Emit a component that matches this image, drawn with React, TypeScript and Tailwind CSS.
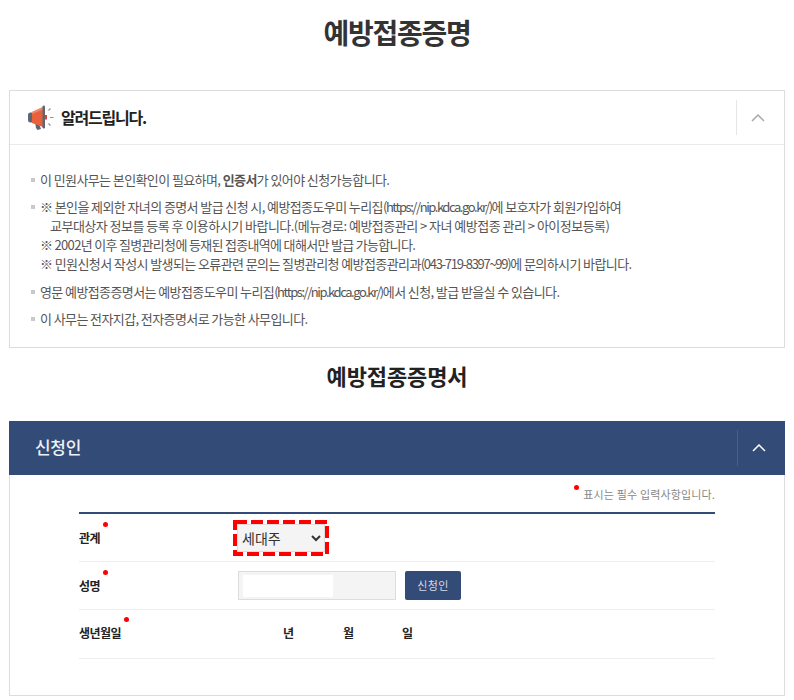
import type { ReactNode } from 'react'

const font = { fontFamily: '"Noto Sans CJK KR", "Noto Sans", sans-serif' }

function Megaphone() {
  return (
    <svg width="28" height="26" viewBox="0 0 28 26" className="shrink-0">
      <path d="M8 17l3-.5 3 7.500-3.500 1-1.500-2z" fill="#5d6675" />
      <rect x="1" y="7.500" width="6" height="10" rx="2.500" fill="#5d6675" />
      <path d="M5 7l11-5v20L5 18z" fill="#e8603c" />
      <path d="M5 7l11-5v2.500L5 9z" fill="#f08a6a" />
      <rect x="15.500" y="0.500" width="2.500" height="23" rx="1.200" fill="#5d6675" />
      <rect x="18" y="10" width="2" height="4.500" fill="#d8433a" />
      <path d="M21.500 5.500l2-2M23 12.500h3.500M21.500 18.500l2 2" stroke="#8a919c" strokeWidth="1.100" fill="none" />
    </svg>
  )
}

function Chevron({ color }: { color: string }) {
  return (
    <svg width="14" height="8" viewBox="0 0 14 8">
      <path d="M1 7l6-6 6 6" stroke={color} strokeWidth="1.500" fill="none" />
    </svg>
  )
}

function Item({ children, className }: { children: ReactNode; className?: string }) {
  return (
    <li className={`flex ${className ?? ''}`}>
      <span className="mt-[8px] mr-[5px] size-[4px] shrink-0 bg-[#c9c9c9]" />
      <div>{children}</div>
    </li>
  )
}

function Url() {
  return <span className="tracking-[-1.450px]">(https://nip.kdca.go.kr/)</span>
}

function Label({ text, dot }: { text: string; dot: string }) {
  return (
    <div className="w-[159px] shrink-0 text-[12px] font-bold tracking-[-0.5px] text-[#222]">
      <span className="relative">
        {text}
        <span className={`absolute top-[-7px] size-[5px] rounded-full bg-[#f00] ${dot}`} />
      </span>
    </div>
  )
}

function App() {
  return (
    <div style={font} className="h-[700px] w-[794px] overflow-hidden bg-white px-[9px]">
      <h1 className="flex h-[63px] items-center justify-center text-[28px] font-bold tracking-[-1.300px] text-[#333]">
        예방접종증명
      </h1>

      <section className="mt-[27px] h-[258px] border-[1px] border-[#dcdcdc]">
        <div className="flex h-[54px] items-center justify-between border-b border-[#eaeaea] pl-[17px]">
          <div className="flex items-center gap-[6px]">
            <Megaphone />
            <h2 className="pb-[1px] text-[16px] font-bold tracking-[-1.200px] text-[#222]">알려드립니다.</h2>
          </div>
          <div className="flex h-[35px] w-[48px] items-center justify-center border-l border-[#e6e6e6] pr-[6px]">
            <Chevron color="#a8a8a8" />
          </div>
        </div>
        <ul className="pt-[25px] pl-[21px] text-[13px] leading-[19px] tracking-[-0.600px] text-[#555]">
          <Item>
            이 민원사무는 본인확인이 필요하며, <b className="font-bold">인증서</b>가 있어야 신청가능합니다.
          </Item>
          <Item className="mt-[8px]">
            ※ 본인을 제외한 자녀의 증명서 발급 신청 시, 예방접종도우미 누리집<Url />에 보호자가 회원가입하여
            <br />
            <span className="pl-[10px] tracking-[-0.520px]">교부대상자 정보를 등록 후 이용하시기 바랍니다.(메뉴경로: 예방접종관리 &gt; 자녀 예방접종 관리 &gt; 아이정보등록)</span>
            <br />
            <span className="tracking-[-0.680px]">※ 2002년 이후 질병관리청에 등재된 접종내역에 대해서만 발급 가능합니다.</span>
            <br />
            ※ 민원신청서 작성시 발생되는 오류관련 문의는 질병관리청 예방접종관리과<span className="tracking-[-1.300px]">(043-719-8397~99)</span>에 문의하시기 바랍니다.
          </Item>
          <Item className="mt-[9px]">
            영문 예방접종증명서는 예방접종도우미 누리집<Url />에서 신청, 발급 받을실 수 있습니다.
          </Item>
          <Item className="mt-[8px]">이 사무는 전자지갑, 전자증명서로 가능한 사무입니다.</Item>
        </ul>
      </section>

      <h2 className="flex h-[73px] items-center justify-center pb-[19px] text-[22px] font-bold tracking-[-0.100px] text-[#222]">
        예방접종증명서
      </h2>

      <section className="h-[275px] border border-t-0 border-[#dcdcdc]">
        <div className="-mx-px flex h-[54px] items-center justify-between bg-[#334b77] pl-[26px]">
          <h3 className="pb-[3px] text-[17px] font-medium tracking-[-0.300px] text-[#eef0f5]">신청인</h3>
          <div className="flex h-[36px] w-[48px] items-center justify-center border-l border-[#4a5f87] pr-[6px]">
            <Chevron color="#ffffff" />
          </div>
        </div>

        <div className="mx-[69px]">
          <p className="flex h-[37px] items-center justify-end pt-[2px] text-[11px] tracking-[0.150px] text-[#888]">
            <span className="relative">
              <span className="absolute top-[-1px] left-[-9px] size-[5px] rounded-full bg-[#f00]" />
              표시는 필수 입력사항입니다.
            </span>
          </p>

          <div className="border-t-2 border-[#334b77]">
            <div className="flex h-[48px] items-center border-b border-[#eeeeee]">
              <Label text="관계" dot="right-[-8px]" />
              <div className="relative -ml-[5px] flex h-[36px] w-[96px] items-center justify-center">
                <select className="h-[28px] w-[88px] border border-[#dddddd] bg-[#f4f4f4] text-[14px] text-[#333]">
                  <option>세대주</option>
                </select>
                <svg width="96" height="36" viewBox="0 0 96 36" className="absolute inset-0">
                  <rect x="2" y="2" width="92" height="32" fill="none" stroke="#ff0000" strokeWidth="4" strokeDasharray="12 4" />
                </svg>
              </div>
            </div>
            <div className="flex h-[48px] items-center border-b border-[#eeeeee]">
              <Label text="성명" dot="right-[-8px]" />
              <div className="flex h-[29px] w-[158px] items-center border border-[#dddddd] bg-[#f4f4f4] pl-[4px]">
                <div className="h-[22px] w-[90px] bg-white" />
              </div>
              <button className="ml-[9px] h-[29px] w-[56px] rounded-[2px] bg-[#334b77] text-[11px] tracking-[0.300px] text-[#d5dae5]">
                신청인
              </button>
            </div>
            <div className="flex h-[49px] items-center border-b border-[#eeeeee] pb-[2px]">
              <Label text="생년월일" dot="right-[-8px]" />
              <div className="flex pl-[45px] text-[12px] font-bold text-[#222]">
                <span className="w-[60px]">년</span>
                <span className="w-[59px]">월</span>
                <span>일</span>
              </div>
            </div>
          </div>
        </div>
      </section>
    </div>
  )
}

export default App
